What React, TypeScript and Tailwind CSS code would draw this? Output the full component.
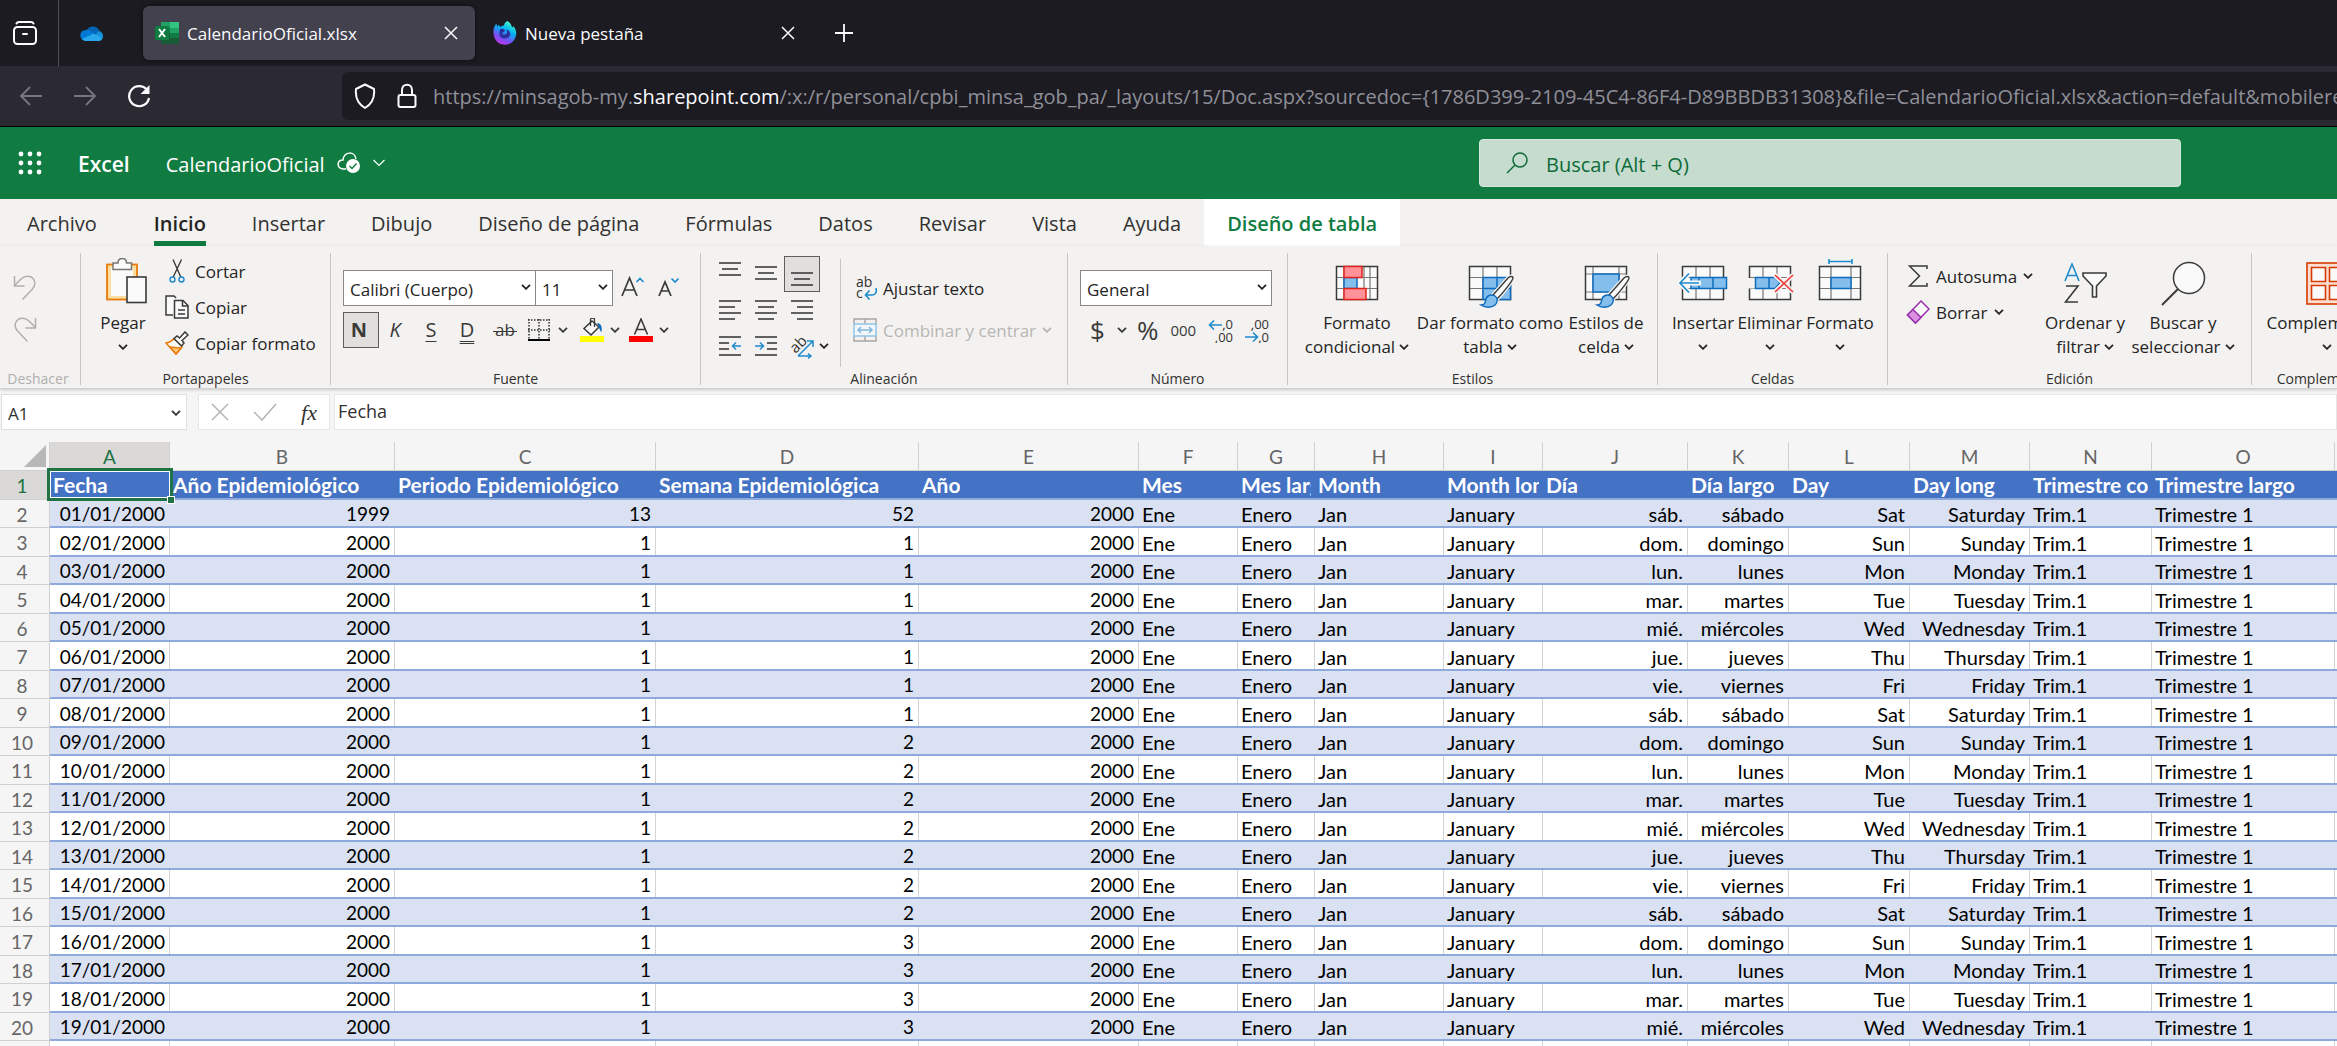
import type { ReactNode } from 'react';
import clsx from 'clsx';

/* ---------- data ---------- */

interface Column {
  letter: string;
  title: string;
  width: string;
  align: 'left' | 'right';
}

const columns: Column[] = [
  { letter: 'A', title: 'Fecha', width: 'w-[120px]', align: 'right' },
  { letter: 'B', title: 'Año Epidemiológico', width: 'w-[225px]', align: 'right' },
  { letter: 'C', title: 'Periodo Epidemiológico', width: 'w-[261px]', align: 'right' },
  { letter: 'D', title: 'Semana Epidemiológica', width: 'w-[263px]', align: 'right' },
  { letter: 'E', title: 'Año', width: 'w-[220px]', align: 'right' },
  { letter: 'F', title: 'Mes', width: 'w-[99px]', align: 'left' },
  { letter: 'G', title: 'Mes largo', width: 'w-[77px]', align: 'left' },
  { letter: 'H', title: 'Month', width: 'w-[129px]', align: 'left' },
  { letter: 'I', title: 'Month long', width: 'w-[99px]', align: 'left' },
  { letter: 'J', title: 'Día', width: 'w-[145px]', align: 'right' },
  { letter: 'K', title: 'Día largo', width: 'w-[101px]', align: 'right' },
  { letter: 'L', title: 'Day', width: 'w-[121px]', align: 'right' },
  { letter: 'M', title: 'Day long', width: 'w-[120px]', align: 'right' },
  { letter: 'N', title: 'Trimestre corto', width: 'w-[122px]', align: 'left' },
  { letter: 'O', title: 'Trimestre largo', width: 'w-[183px]', align: 'left' },
];

// Starts on Saturday, the weekday of 01/01/2000
const weekdays = [
  ['sáb.', 'sábado', 'Sat', 'Saturday'],
  ['dom.', 'domingo', 'Sun', 'Sunday'],
  ['lun.', 'lunes', 'Mon', 'Monday'],
  ['mar.', 'martes', 'Tue', 'Tuesday'],
  ['mié.', 'miércoles', 'Wed', 'Wednesday'],
  ['jue.', 'jueves', 'Thu', 'Thursday'],
  ['vie.', 'viernes', 'Fri', 'Friday'],
];

const rows = Array.from({ length: 20 }, (_, i) => {
  const first = i === 0;
  return [
    `${String(i + 1).padStart(2, '0')}/01/2000`,
    first ? '1999' : '2000',
    first ? '13' : '1',
    first ? '52' : String(Math.floor((i - 1) / 7) + 1),
    '2000',
    'Ene',
    'Enero',
    'Jan',
    'January',
    ...weekdays[i % 7],
    'Trim.1',
    'Trimestre 1',
  ];
});

const ribbonTabs = [
  'Archivo',
  'Inicio',
  'Insertar',
  'Dibujo',
  'Diseño de página',
  'Fórmulas',
  'Datos',
  'Revisar',
  'Vista',
  'Ayuda',
  'Diseño de tabla',
];

/* ---------- small icons ---------- */

function Chevron({ className }: { className?: string }) {
  return (
    <svg viewBox="0 0 10 6" className={clsx('h-[6px] w-[10px] shrink-0', className)} fill="none" stroke="currentColor" strokeWidth="1.8">
      <path d="M1 0.8l4 4 4-4" />
    </svg>
  );
}

function CloseIcon() {
  return (
    <svg viewBox="0 0 14 14" className="h-[14px] w-[14px]" fill="none" stroke="#fbfbfe" strokeWidth="1.5">
      <path d="M1 1l12 12M13 1L1 13" />
    </svg>
  );
}

function FirefoxViewIcon() {
  return (
    <svg viewBox="0 0 26 26" className="h-[26px] w-[26px]" fill="none" stroke="#fbfbfe" strokeWidth="2" strokeLinecap="round">
      <path d="M4.500 3.500C5 2.500 5.500 2 7 2h12c1.500 0 2 .5 2.500 1.500" />
      <rect x="2" y="7" width="22" height="17" rx="3.500" />
      <path d="M11 14h4" />
    </svg>
  );
}

function OneDriveIcon() {
  return (
    <svg viewBox="0 0 24 16" className="h-4 w-6">
      <path d="M7 5a7 7 0 0 1 12.500 1L14 10z" fill="#0364b8" />
      <path d="M5 5.200a5.500 5.500 0 0 1 5 .3l6 4L4 15A5 5 0 0 1 5 5.200z" fill="#0078d4" />
      <path d="M18.500 5.900A5 5 0 0 1 22 14l-7-4z" fill="#1490df" />
      <path d="M14 8.500l8.500 5A4 4 0 0 1 19.500 16H5.500A5 5 0 0 1 1.800 14z" fill="#28a8ea" />
    </svg>
  );
}

function ExcelIcon() {
  return (
    <svg viewBox="0 0 24 22" className="h-[22px] w-6">
      <rect x="6" y="0" width="9" height="6" fill="#21a366" />
      <rect x="15" y="0" width="9" height="6" fill="#33c481" />
      <rect x="6" y="6" width="9" height="5" fill="#107c41" />
      <rect x="15" y="6" width="9" height="5" fill="#21a366" />
      <rect x="6" y="11" width="9" height="11" fill="#185c37" />
      <rect x="15" y="11" width="9" height="5" fill="#107c41" />
      <rect x="15" y="16" width="9" height="6" fill="#185c37" />
      <rect x="0" y="4" width="14" height="14" rx="1" fill="#107c41" />
      <path d="M4 7l6 8M10 7l-6 8" stroke="#fff" strokeWidth="2" />
    </svg>
  );
}

function FirefoxIcon() {
  return (
    <svg viewBox="0 0 24 24" className="h-6 w-6">
      <defs>
        <linearGradient id="fxFlame" x1="0.8" y1="0" x2="0.3" y2="1">
          <stop offset="0" stopColor="#54ffbd" />
          <stop offset="0.4" stopColor="#00b3f4" />
          <stop offset="0.75" stopColor="#7a4df5" />
          <stop offset="1" stopColor="#c139e6" />
        </linearGradient>
      </defs>
      <path
        d="M14.500 0c3 2 4 4 4.500 6.500.8-.3 1.200-1 1.200-1.500 3.300 3.500 3.800 8 2 12A11.300 11.300 0 0 1 1.200 16C0 12 .3 8 1.500 5.500L3.300 2.500l1 3 1.500-1.700 1.500 2.200C8.500 5 9.500 4.500 11 4.500c.2-2 1.500-3.700 3.500-4.500z"
        fill="url(#fxFlame)"
      />
      <path d="M7.500 8c3-1 5 1 4 2.500-1 1-2 .8-2.500 1.800 1 2 4.500 1.500 5-.8.3-1.500-.5-2.500-1-3 3 .5 4.800 3 4 5.800-1.500 4-8 4.500-10 .7C6 13 6.500 10 7.500 8z" fill="#2b2f9c" />
    </svg>
  );
}

function WaffleIcon() {
  return (
    <svg viewBox="0 0 24 24" className="h-6 w-6" fill="#fff">
      {[3, 12, 21].map((y) => [3, 12, 21].map((x) => <circle key={`${x}-${y}`} cx={x} cy={y} r="2.400" />))}
    </svg>
  );
}

/* ---------- ribbon icons ---------- */

const alignLines: Record<string, number[][]> = {
  top: [[0, 2, 22], [3, 8, 16], [0, 14, 22]],
  middle: [[0, 6, 22], [3, 12, 16], [0, 18, 22]],
  bottom: [[0, 12, 22], [3, 18, 16], [0, 24, 22]],
  left: [[0, 4, 22], [0, 10, 16], [0, 16, 22], [0, 22, 16]],
  center: [[0, 4, 22], [3, 10, 16], [0, 16, 22], [3, 22, 16]],
  right: [[0, 4, 22], [6, 10, 16], [0, 16, 22], [6, 22, 16]],
};

function AlignIcon({ kind }: { kind: string }) {
  return (
    <svg viewBox="0 0 22 26" className="h-[26px] w-[22px]" stroke="#323130" strokeWidth="1.5">
      {alignLines[kind].map(([x, y, w]) => (
        <path key={y} d={`M${x} ${y}h${w}`} />
      ))}
    </svg>
  );
}

function IndentIcon({ increase }: { increase?: boolean }) {
  return (
    <svg viewBox="0 0 22 22" className="h-[22px] w-[22px]" fill="none" stroke="#323130" strokeWidth="1.5">
      <path d={increase ? 'M0 2h22M12 8h10M12 14h10M0 20h22' : 'M0 2h22M0 8h10M0 14h10M0 20h22'} />
      <path stroke="#1e8bcd" d={increase ? 'M0 11h8M5 7.500l3.500 3.500L5 14.500' : 'M14 11h8M17 7.500L13.500 11l3.500 3.500'} />
    </svg>
  );
}

function OrientationIcon() {
  return (
    <svg viewBox="0 0 26 26" className="h-[26px] w-[26px]" fill="none">
      <text x="2" y="18" fontSize="15" fill="#323130" transform="rotate(-45 8 14)">ab</text>
      <path d="M9 23L24 8M18 8h6v6M9 23h13M19 20.500l3 2.500-3 2.500" stroke="#1e8bcd" strokeWidth="1.500" />
    </svg>
  );
}

function PasteIcon() {
  return (
    <svg viewBox="0 0 48 48" className="h-12 w-12">
      <rect x="8" y="6.500" width="30" height="35" fill="#fbdfa0" stroke="#e97b0c" strokeWidth="1.800" />
      <rect x="12" y="10" width="22" height="28" fill="#fafafa" />
      <path d="M14 11.500V5h5c0-6 8.500-6 8.500 0h5v6.500z" fill="#fafafa" stroke="#797774" strokeWidth="1.500" />
      <rect x="28" y="19" width="19" height="25.500" fill="#fafafa" stroke="#3a3a38" strokeWidth="1.600" />
    </svg>
  );
}

function CutIcon() {
  return (
    <svg viewBox="0 0 24 24" className="h-6 w-6" fill="none" strokeWidth="1.400">
      <path d="M8 0.500l8 18M16.500 0.500L8 18.500" stroke="#3a3a38" />
      <circle cx="7.500" cy="20.500" r="2.500" stroke="#1e8bcd" />
      <circle cx="16.500" cy="20.500" r="2.500" stroke="#1e8bcd" />
    </svg>
  );
}

function CopyIcon() {
  return (
    <svg viewBox="0 0 24 24" className="h-6 w-6" fill="#fafafa" stroke="#3a3a38" strokeWidth="1.500">
      <path d="M8 20H1V1h8l2 2" />
      <path d="M9.500 5.500H18l5 5v12.500H9.500z" />
      <path d="M17.500 5.500V11H23M13 15h7M13 19h7" fill="none" />
    </svg>
  );
}

function FormatPainterIcon() {
  return (
    <svg viewBox="0 0 24 24" className="h-6 w-6" strokeWidth="1.500">
      <path d="M1 12c3-.5 6-2 8-4.500l8 8c-2 3-4 5.500-6 7.500z" fill="#fafafa" stroke="#e97b0c" />
      <path d="M5 16l11 1-5 6z" fill="#fbc56d" stroke="#e97b0c" />
      <path d="M9 7.500L12 5l2.500 2 5.500-6 3 3-6 5.500 2 2.500-2.500 3z" fill="#fafafa" stroke="#3a3a38" />
    </svg>
  );
}

function UndoIcon({ redo }: { redo?: boolean }) {
  return (
    <svg viewBox="0 0 25 26" className="h-[26px] w-[25px]" fill="none" stroke="#b1afad" strokeWidth="1.500">
      <path
        d={
          redo
            ? 'M23.500 1v10h-10M23.500 10.500L17 4C14 1 8 0 5 3.500C2 7 3 11 6 14.500L15.500 24.500'
            : 'M2.500 1v10h10M2.500 10.500L9 4C12 1 18 0 21 3.500C24 7 23 11 20 14.500L10.500 24.500'
        }
      />
    </svg>
  );
}

function BordersIcon() {
  return (
    <svg viewBox="0 0 22 22" className="h-[22px] w-[22px]" fill="none" stroke="#323130">
      <path d="M0 1h22M0 11h22M1 0v20M11 0v20M21 0v20" strokeWidth="1.500" strokeDasharray="1.500 1.500" />
      <path d="M0 21h22" stroke="#000" strokeWidth="2" />
    </svg>
  );
}

function FillIcon() {
  return (
    <svg viewBox="0 0 24 24" className="h-6 w-6" fill="none">
      <path d="M12 3l7 6-8 8-7-6.500z" fill="#fafafa" stroke="#3a3a38" strokeWidth="1.500" />
      <path d="M10.500 8V1.500c0-2 4-2 4 0V9" stroke="#3a3a38" strokeWidth="1.300" />
      <path d="M17 5c4 0 5.500 4 4.500 9-2-1-2-5-4.500-9z" fill="#0f6cbd" />
      <rect x="0" y="18" width="24" height="6" fill="#ff0" />
    </svg>
  );
}

function FontColorIcon() {
  return (
    <svg viewBox="0 0 24 24" className="h-6 w-6">
      <path d="M5.500 16.500L12 1l6.500 15.500M8 11.500h8" fill="none" stroke="#3a3a38" strokeWidth="1.600" />
      <rect x="0" y="18" width="24" height="6" fill="#f00" />
    </svg>
  );
}

function FontSizeIcon({ shrink }: { shrink?: boolean }) {
  return (
    <svg viewBox="0 0 24 24" className="h-6 w-6" fill="none" stroke="#3a3a38" strokeWidth="1.700">
      <path d={shrink ? 'M2 20L8 6l6 14M4.500 15h7' : 'M1 20L8.500 2 16 20M4 14h9'} />
      <path stroke="#1e8bcd" d={shrink ? 'M14.500 2.500l3.500 3.500 3.500-3.500' : 'M15.500 6L19 2.500 22.500 6'} />
    </svg>
  );
}

function WrapIcon() {
  return (
    <svg viewBox="0 0 24 26" className="h-[26px] w-6" fill="none">
      <text x="3" y="12" fontSize="14" fill="#323130">ab</text>
      <text x="3" y="23" fontSize="14" fill="#323130">c</text>
      <path d="M23 13c1 5-1 7-4 7h-6M16.500 15.500L12.500 20l4 4.500" stroke="#1e8bcd" strokeWidth="1.600" />
    </svg>
  );
}

function MergeIcon() {
  return (
    <svg viewBox="0 0 24 24" className="h-6 w-6" fill="none" strokeWidth="1.500">
      <path d="M1 6V1h22v5M1 18v5h22v-5M12 1v5M12 18v5" stroke="#a8a6a4" />
      <rect x="1" y="6" width="22" height="12" fill="#f3f7fa" stroke="#92c4e6" />
      <path d="M5 12h14M8 9l-3 3 3 3M16 9l3 3-3 3" stroke="#80b9e0" />
    </svg>
  );
}

function DecimalIcon({ decrease }: { decrease?: boolean }) {
  return (
    <svg viewBox="0 0 26 26" className="h-[26px] w-[26px]" fill="none">
      <text x="25" y="12" fontSize="13" textAnchor="end" fill="#323130">{decrease ? ',00' : ',0'}</text>
      <text x="25" y="25" fontSize="13" textAnchor="end" fill="#323130">{decrease ? ',0' : ',00'}</text>
      <path d={decrease ? 'M1 20h12M9 15.500l4.500 4.500L9 24.500' : 'M14 8H2M6 3.500L1.500 8 6 12.500'} stroke="#1e8bcd" strokeWidth="1.600" />
    </svg>
  );
}

// Outer frame shared by every spreadsheet glyph of the ribbon
function SheetFrame({ children, cols }: { children?: ReactNode; cols: string }) {
  return (
    <>
      <rect x="3.500" y="8.500" width="41" height="33" fill="#fafafa" />
      <path d={cols} stroke="#797774" strokeWidth="1.200" fill="none" />
      <rect x="3.500" y="8.500" width="41" height="33" fill="none" stroke="#3a3a38" strokeWidth="1.500" />
      {children}
    </>
  );
}

function Brush() {
  return (
    <>
      <path d="M27 37L42 20c2-2 5-2 5 0s-9 14-16 21z" fill="#fafafa" stroke="#f3f2f1" strokeWidth="4" />
      <path d="M27 37L42 20c2-2 5-2 5 0s-9 14-16 21z" fill="#fafafa" stroke="#3a3a38" strokeWidth="1.400" />
      <path d="M15 47c4 0 4-2 5-6s6-5 9-3 3 6 0 9-10 3-14 0z" fill="#83beec" stroke="#0f6cbd" strokeWidth="1.400" />
    </>
  );
}

function ConditionalIcon() {
  return (
    <svg viewBox="0 0 48 48" className="h-12 w-12">
      <SheetFrame cols="M11 8v34M37 8v34M31 8v34M3 19.500h42M3 30.500h42">
        <rect x="11" y="19.500" width="13" height="11" fill="#83beec" stroke="#0f6cbd" strokeWidth="1.500" />
        <rect x="11" y="8.500" width="18" height="11" fill="#ff9199" stroke="#e2231a" strokeWidth="1.500" />
        <rect x="11" y="30.500" width="22" height="11" fill="#ff9199" stroke="#e2231a" strokeWidth="1.500" />
      </SheetFrame>
    </svg>
  );
}

function TableFormatIcon() {
  return (
    <svg viewBox="0 0 48 48" className="h-12 w-12 overflow-visible">
      <SheetFrame cols="M17 8v34M31 8v34M3 19.500h42M3 30.500h42">
        <path d="M17 19.500h27.500v22H17zM31 19v22M17 30.500h28" fill="#83beec" stroke="#0f6cbd" strokeWidth="1.500" />
      </SheetFrame>
      <Brush />
    </svg>
  );
}

function CellStylesIcon() {
  return (
    <svg viewBox="0 0 48 48" className="h-12 w-12 overflow-visible">
      <SheetFrame cols="M11 8v34M37 8v34M3 16h42M3 34h42">
        <rect x="11" y="16" width="26" height="18" fill="#83beec" stroke="#0f6cbd" strokeWidth="1.500" />
      </SheetFrame>
      <Brush />
    </svg>
  );
}

function InsertCellsIcon() {
  return (
    <svg viewBox="0 0 48 48" className="h-12 w-12 overflow-visible">
      <SheetFrame cols="M17 8v34M31 8v34M3 19.500h42M3 30.500h42">
        <path d="M12 19.500h35.500v11H12zM20 19v12M34 19v12" fill="#83beec" stroke="#0f6cbd" strokeWidth="1.500" />
        <path d="M22 25H2M10 15.500L1 25l9 9.500" stroke="#f8f8f8" strokeWidth="5" fill="none" />
        <path d="M20 25H1.500M10 15.500L1 25l9 9.500" stroke="#1e8bcd" strokeWidth="1.700" fill="none" />
      </SheetFrame>
    </svg>
  );
}

function DeleteCellsIcon() {
  return (
    <svg viewBox="0 0 48 48" className="h-12 w-12 overflow-visible">
      <SheetFrame cols="M17 8v34M31 8v34M3 19.500h42M3 30.500h42">
        <path d="M0 20h9v10.500H0z" fill="#f3f2f1" />
        <path d="M9.500 19.500H29l5 5.500-5 5.500H9.500zM23 19v12" fill="#83beec" stroke="#0f6cbd" strokeWidth="1.500" />
        <path d="M29 17l18 17M47 17L29 34" stroke="#f3f2f1" strokeWidth="5" />
        <path d="M29 17l18 17M47 17L29 34" stroke="#f04040" strokeWidth="1.700" />
      </SheetFrame>
    </svg>
  );
}

function CellFormatIcon() {
  return (
    <svg viewBox="0 0 48 48" className="h-12 w-12">
      <SheetFrame cols="M15 8v34M35 8v34M3 19.500h42M3 30.500h42">
        <rect x="15" y="19.500" width="20" height="11" fill="#83beec" stroke="#0f6cbd" strokeWidth="1.500" />
        <path d="M13 1v5M36 1v5M13 3.500h23" stroke="#1e8bcd" strokeWidth="1.600" />
      </SheetFrame>
    </svg>
  );
}

function SortFilterIcon() {
  return (
    <svg viewBox="0 0 48 48" className="h-12 w-12" fill="none" strokeWidth="1.600">
      <path d="M4 23L11 6l7 17M6.500 17.500h9" stroke="#1e8bcd" />
      <path d="M5 28h12L4.500 44H17" stroke="#3a3a38" />
      <path d="M22 15h23v3L35.500 28v11h-4V28L22 18z" fill="#fafafa" stroke="#3a3a38" />
    </svg>
  );
}

function FindIcon() {
  return (
    <svg viewBox="0 0 48 48" className="h-12 w-12" fill="none" stroke="#3a3a38" strokeWidth="1.500">
      <circle cx="30" cy="20" r="15.500" fill="#fafafa" />
      <path d="M19 31L3 47" strokeWidth="2" />
    </svg>
  );
}

function AddInsIcon() {
  return (
    <svg viewBox="0 0 48 48" className="h-12 w-12" stroke="#d83b01" strokeWidth="1.600">
      <rect x="4" y="5" width="41" height="41" fill="#fcded3" />
      <path d="M8.500 9.500h14v14h-14zM26.500 9.500h14v14h-14zM8.500 27.500h14v14h-14zM26.500 27.500h14v14h-14z" fill="#fafafa" />
    </svg>
  );
}

function SigmaIcon() {
  return (
    <svg viewBox="0 0 24 24" className="h-6 w-6" fill="none" stroke="#3a3a38" strokeWidth="1.500">
      <path d="M21 5V2H3.500l10 10-10 10H21v-3" />
    </svg>
  );
}

function EraserIcon() {
  return (
    <svg viewBox="0 0 24 24" className="h-6 w-6" stroke="#9b2fae" strokeWidth="1.500">
      <path d="M15 1l8 8L9.500 23l-8-8z" fill="#fafafa" />
      <path d="M7 9.500l8 8L9.500 23l-8-8z" fill="#d991e0" />
    </svg>
  );
}

/* ---------- ribbon building blocks ---------- */

function Group({ label, width, children, muted }: { label: string; width: string; children: ReactNode; muted?: boolean }) {
  return (
    <section className={clsx('flex h-[132px] shrink-0 flex-col border-r border-[#c8c6c4]', width)}>
      <div className="flex h-[120px]">{children}</div>
      <h2 className={clsx('text-center text-[14px] leading-3', muted ? 'pr-1 text-[#b1afad]' : 'text-[#323130]')}>{label}</h2>
    </section>
  );
}

function BigButton({ icon, lines, width }: { icon: ReactNode; lines: string[]; width: string }) {
  const [first, second] = lines;
  return (
    <button type="button" className={clsx('flex shrink-0 flex-col items-center pt-[5px] whitespace-nowrap', width)}>
      {icon}
      <span className="mt-[5px] leading-6">{first}</span>
      <span className="flex h-6 items-center gap-1 leading-6">
        {second}
        <Chevron />
      </span>
    </button>
  );
}

function SmallButton({ icon, label, arrow }: { icon: ReactNode; label: string; arrow?: boolean }) {
  return (
    <button type="button" className="flex h-9 items-center gap-[6px] whitespace-nowrap">
      {icon}
      <span className="pt-px">{label}</span>
      {arrow && <Chevron />}
    </button>
  );
}

function Combo({ label, value, width }: { label: string; value: string; width: string }) {
  return (
    <div className={clsx('relative h-9', width)}>
      <select
        aria-label={label}
        className="h-full w-full appearance-none border border-[#8a8886] bg-white pt-[3px] pl-[6px] text-[17px] text-[#252423]"
      >
        <option>{value}</option>
      </select>
      <Chevron className="pointer-events-none absolute top-[14px] right-[5px]" />
    </div>
  );
}

function IconButton({ label, active, children }: { label: string; active?: boolean; children: ReactNode }) {
  return (
    <button
      type="button"
      aria-label={label}
      className={clsx('flex h-9 w-9 items-center justify-center', active && 'border border-[#605e5c] bg-[#e1dfdd]')}
    >
      {children}
    </button>
  );
}

function Ribbon() {
  return (
    <div className="z-10 flex shrink-0 overflow-hidden border-b border-[#d2d0ce] bg-[#f3f2f1] pt-[7px] pb-[3px] text-[17px] text-[#252423] shadow-[0_1px_3px_rgba(0,0,0,0.18)]">
      <Group label="Deshacer" width="w-[81px]" muted>
        <div className="flex flex-col gap-4 pt-[22px] pl-3">
          <button type="button" aria-label="Deshacer"><UndoIcon /></button>
          <button type="button" aria-label="Rehacer"><UndoIcon redo /></button>
        </div>
      </Group>

      <Group label="Portapapeles" width="w-[250px]">
        <div className="flex pl-2">
          <BigButton icon={<PasteIcon />} lines={['Pegar']} width="w-[68px]" />
          <div className="flex flex-col pl-2">
            <SmallButton icon={<CutIcon />} label="Cortar" />
            <SmallButton icon={<CopyIcon />} label="Copiar" />
            <SmallButton icon={<FormatPainterIcon />} label="Copiar formato" />
          </div>
        </div>
      </Group>

      <Group label="Fuente" width="w-[370px]">
        <div className="flex flex-col gap-[6px] pt-[17px] pl-3">
          <div className="flex items-center">
            <Combo label="Fuente" value="Calibri (Cuerpo)" width="w-[193px]" />
            <Combo label="Tamaño de fuente" value="11" width="w-[78px] -ml-px" />
            <button type="button" aria-label="Aumentar tamaño" className="ml-2"><FontSizeIcon /></button>
            <button type="button" aria-label="Disminuir tamaño" className="ml-3"><FontSizeIcon shrink /></button>
          </div>
          <div className="flex items-center text-[20px] text-[#3a3a38]">
            <IconButton label="Negrita" active><b className="pr-1">N</b></IconButton>
            <IconButton label="Cursiva"><i className="pr-1">K</i></IconButton>
            <IconButton label="Subrayado"><span className="mr-1 underline decoration-1 underline-offset-4">S</span></IconButton>
            <IconButton label="Doble subrayado">
              <span className="mr-1 underline decoration-double decoration-1 underline-offset-4">D</span>
            </IconButton>
            <IconButton label="Tachado">
              <span className="relative text-[17px]">
                ab
                <span className="absolute inset-x-[-2px] top-[14px] h-px bg-[#3a3a38]" />
              </span>
            </IconButton>
            <div className="ml-[5px] flex items-center gap-2">
              <button type="button" aria-label="Bordes" className="flex items-center gap-2"><BordersIcon /><Chevron /></button>
              <button type="button" aria-label="Color de relleno" className="flex items-center gap-[6px] pl-1"><FillIcon /><Chevron /></button>
              <button type="button" aria-label="Color de fuente" className="flex items-center gap-[6px] pl-px"><FontColorIcon /><Chevron /></button>
            </div>
          </div>
        </div>
      </Group>

      <Group label="Alineación" width="w-[367px]">
        <div className="pt-[3px] pl-[11px]">
          <div className="flex">
            <IconButton label="Alinear arriba"><AlignIcon kind="top" /></IconButton>
            <IconButton label="Alinear en el medio"><AlignIcon kind="middle" /></IconButton>
            <IconButton label="Alinear abajo" active><AlignIcon kind="bottom" /></IconButton>
          </div>
          <div className="flex">
            <IconButton label="Alinear a la izquierda"><AlignIcon kind="left" /></IconButton>
            <IconButton label="Centrar"><AlignIcon kind="center" /></IconButton>
            <IconButton label="Alinear a la derecha"><AlignIcon kind="right" /></IconButton>
          </div>
          <div className="flex">
            <IconButton label="Disminuir sangría"><IndentIcon /></IconButton>
            <IconButton label="Aumentar sangría"><IndentIcon increase /></IconButton>
            <button type="button" aria-label="Orientación" className="flex items-center gap-1 pl-[5px]">
              <OrientationIcon />
              <Chevron />
            </button>
          </div>
        </div>
        <div className="my-[6px] ml-[11px] border-l border-[#c8c6c4]" />
        <div className="flex flex-col gap-[6px] pt-[17px] pl-3">
          <SmallButton icon={<WrapIcon />} label="Ajustar texto" />
          <div className="text-[#b8b6b4]">
            <SmallButton icon={<MergeIcon />} label="Combinar y centrar" arrow />
          </div>
        </div>
      </Group>

      <Group label="Número" width="w-[220px]">
        <div className="flex flex-col gap-[6px] pt-[17px] pl-3">
          <Combo label="Formato de número" value="General" width="w-[192px]" />
          <div className="flex h-9 items-center pl-[10px] text-[#3a3a38]">
            <button type="button" aria-label="Moneda" className="flex items-center gap-3 text-[26px] leading-9">$<Chevron /></button>
            <button type="button" aria-label="Porcentaje" className="ml-[10px] text-[26px] leading-9">%</button>
            <button type="button" aria-label="Millares" className="ml-3 text-[15px]">000</button>
            <button type="button" aria-label="Aumentar decimales" className="ml-3"><DecimalIcon /></button>
            <button type="button" aria-label="Disminuir decimales" className="ml-[10px]"><DecimalIcon decrease /></button>
          </div>
        </div>
      </Group>

      <Group label="Estilos" width="w-[370px]">
        <div className="flex pl-3">
          <BigButton icon={<ConditionalIcon />} lines={['Formato', 'condicional']} width="w-[114px]" />
          <BigButton icon={<TableFormatIcon />} lines={['Dar formato como', 'tabla']} width="w-[152px]" />
          <BigButton icon={<CellStylesIcon />} lines={['Estilos de', 'celda']} width="w-[80px]" />
        </div>
      </Group>

      <Group label="Celdas" width="w-[230px]">
        <div className="flex pl-3">
          <BigButton icon={<InsertCellsIcon />} lines={['Insertar']} width="w-[66px]" />
          <BigButton icon={<DeleteCellsIcon />} lines={['Eliminar']} width="w-[68px]" />
          <BigButton icon={<CellFormatIcon />} lines={['Formato']} width="w-[72px]" />
        </div>
      </Group>

      <Group label="Edición" width="w-[364px]">
        <div className="flex w-[152px] flex-col pt-[5px] pl-[18px]">
          <SmallButton icon={<SigmaIcon />} label="Autosuma" arrow />
          <SmallButton icon={<EraserIcon />} label="Borrar" arrow />
        </div>
        <BigButton icon={<SortFilterIcon />} lines={['Ordenar y', 'filtrar']} width="w-[90px]" />
        <BigButton icon={<FindIcon />} lines={['Buscar y', 'seleccionar']} width="w-[106px]" />
      </Group>

      <Group label="Complementos" width="w-[150px]">
        <BigButton icon={<AddInsIcon />} lines={['Complementos']} width="w-[150px]" />
      </Group>
    </div>
  );
}

/* ---------- browser chrome ---------- */

function BrowserTabs() {
  return (
    <div className="flex h-[66px] shrink-0 items-center bg-[#1c1b22] text-[17px] text-[#fbfbfe]">
      <button type="button" aria-label="Firefox View" className="flex h-full w-[59px] items-center border-r border-[#52525e] pl-3">
        <FirefoxViewIcon />
      </button>
      <button type="button" aria-label="OneDrive" className="flex w-[84px] items-center pl-[21px]"><OneDriveIcon /></button>
      <div className="flex h-[54px] w-[332px] items-center rounded-md bg-[#42414d] pr-[17px] pl-3 shadow-[0_0_4px_rgba(0,0,0,0.6)]">
        <ExcelIcon />
        <span className="ml-2 flex-1 pt-[2px]">CalendarioOficial.xlsx</span>
        <button type="button" aria-label="Cerrar pestaña"><CloseIcon /></button>
      </div>
      <div className="flex h-[54px] w-[338px] items-center pr-[18px] pl-[18px]">
        <FirefoxIcon />
        <span className="ml-2 flex-1 pt-[2px]">Nueva pestaña</span>
        <button type="button" aria-label="Cerrar pestaña"><CloseIcon /></button>
      </div>
      <button type="button" aria-label="Abrir una pestaña nueva" className="ml-[22px]">
        <svg viewBox="0 0 18 18" className="h-[18px] w-[18px]" stroke="#fbfbfe" strokeWidth="1.800">
          <path d="M9 0v18M0 9h18" />
        </svg>
      </button>
    </div>
  );
}

function BrowserToolbar() {
  return (
    <div className="flex h-[61px] shrink-0 items-center overflow-hidden border-b border-black bg-[#2b2a33]">
      <div className="flex w-[342px] shrink-0 items-center gap-[30px] pl-[19px]">
        <button type="button" aria-label="Atrás">
          <svg viewBox="0 0 24 24" className="h-6 w-6" fill="none" stroke="#77767e" strokeWidth="1.800">
            <path d="M23 12H2M11 3l-9 9 9 9" />
          </svg>
        </button>
        <button type="button" aria-label="Adelante">
          <svg viewBox="0 0 24 24" className="h-6 w-6" fill="none" stroke="#77767e" strokeWidth="1.800">
            <path d="M1 12h21M13 3l9 9-9 9" />
          </svg>
        </button>
        <button type="button" aria-label="Recargar">
          <svg viewBox="0 0 24 24" className="h-6 w-6" fill="none" stroke="#fbfbfe" strokeWidth="2.200">
            <path d="M20 6a10 10 0 1 0 2 8" />
            <path d="M22.500 1v9h-9z" fill="#fbfbfe" stroke="none" />
          </svg>
        </button>
      </div>
      <div className="flex h-12 flex-1 items-center overflow-hidden rounded-l-md bg-[#1c1b22] pl-3 text-[20px] whitespace-nowrap text-[#8f8f97]">
        <svg viewBox="0 0 22 26" className="h-[26px] w-[22px] shrink-0" fill="none" stroke="#fbfbfe" strokeWidth="2" strokeLinejoin="round">
          <path d="M11 1.500l9 4.500c1 9-2 15-9 19C4 21 1 15 2 6z" />
        </svg>
        <svg viewBox="0 0 20 26" className="ml-[21px] h-[26px] w-5 shrink-0" fill="none" stroke="#fbfbfe" strokeWidth="2">
          <path d="M5 12V7c0-7 10-7 10 0v5" />
          <rect x="1.500" y="12" width="17" height="12" rx="2" />
        </svg>
        <p className="ml-4 pt-[2px]">
          https://minsagob-my.<span className="text-[#fbfbfe]">sharepoint.com</span>
          /:x:/r/personal/cpbi_minsa_gob_pa/_layouts/15/Doc.aspx?sourcedoc=&#123;1786D399-2109-45C4-86F4-D89BBDB31308&#125;&amp;file=CalendarioOficial.xlsx&amp;action=default&amp;mobileredirect=true
        </p>
      </div>
    </div>
  );
}

/* ---------- Excel header ---------- */

function ExcelHeader() {
  return (
    <header className="flex h-[72px] shrink-0 items-center bg-[#107c41] pl-[18px] text-[20px] text-white">
      <button type="button" aria-label="Iniciador de aplicaciones"><WaffleIcon /></button>
      <a href="#" className="ml-9 pt-[3px] text-[21px] font-semibold">Excel</a>
      <button type="button" className="ml-9 flex items-center">
        <span className="pt-[3px]">CalendarioOficial</span>
        <svg viewBox="0 0 24 22" className="ml-3 h-[22px] w-6" fill="none" stroke="#fff" strokeWidth="1.500">
          <path d="M9 17H6c-7-1-6-9 0-9 1-9 12-9 13-1" />
          <circle cx="16" cy="14" r="7" fill="#fff" stroke="none" />
          <path d="M12.500 14l2.500 2.500 4.500-5" stroke="#107c41" />
        </svg>
        <svg viewBox="0 0 12 8" className="ml-3 h-2 w-3" fill="none" stroke="#fff" strokeWidth="1.200">
          <path d="M0.500 1L6 6.500 11.500 1" />
        </svg>
      </button>
      <label className="mr-[156px] ml-auto flex h-12 w-[702px] items-center rounded-[4px] border border-[#d5e8dc] bg-[#c6dccf] pl-[26px]">
        <svg viewBox="0 0 22 22" className="h-[22px] w-[22px]" fill="none" stroke="#0e6b38" strokeWidth="1.500">
          <circle cx="14" cy="8" r="7" />
          <path d="M9 13l-8 8" />
        </svg>
        <input aria-label="Buscar" placeholder="Buscar (Alt + Q)" className="ml-[18px] flex-1 bg-transparent pt-[3px] outline-none placeholder:text-[#0e6b38]" />
      </label>
    </header>
  );
}

function RibbonTabs() {
  return (
    <nav className="flex h-[47px] shrink-0 bg-[#f3f2f1] text-[20px] whitespace-nowrap text-[#323130]">
      {ribbonTabs.map((tab) => (
        <button
          key={tab}
          type="button"
          className={clsx(
            'px-[23px]',
            tab === 'Archivo' && 'mr-[11px] ml-1',
            tab === 'Diseño de tabla' && 'bg-white font-semibold text-[#107c41]',
            tab === 'Inicio' && 'font-semibold text-[#252423]',
          )}
        >
          <span className={clsx('flex h-full items-center', tab === 'Inicio' ? 'border-b-[5px] border-[#107c41] pt-[7px]' : 'pt-[2px]')}>{tab}</span>
        </button>
      ))}
    </nav>
  );
}

function FormulaBar() {
  return (
    <div className="flex shrink-0 bg-[#f5f5f5] pt-[5px] pb-3 text-[18px] text-[#323130]">
      <div className="relative ml-px h-9 w-[186px]">
        <select aria-label="Cuadro de nombres" className="h-full w-full appearance-none border border-[#e1dfdd] bg-white pt-[3px] pl-[6px] text-[17px]">
          <option>A1</option>
        </select>
        <Chevron className="pointer-events-none absolute top-[16px] right-[6px]" />
      </div>
      <div className="ml-[11px] flex h-9 w-[132px] items-center justify-between border border-[#e6e6e6] bg-white pr-3 pl-3">
        <button type="button" aria-label="Cancelar">
          <svg viewBox="0 0 18 18" className="h-[18px] w-[18px]" stroke="#b5b3b1" strokeWidth="1.500">
            <path d="M1 1l16 16M17 1L1 17" />
          </svg>
        </button>
        <button type="button" aria-label="Introducir">
          <svg viewBox="0 0 24 18" className="h-[18px] w-6" fill="none" stroke="#b5b3b1" strokeWidth="1.500">
            <path d="M1 9l8 8L23 1" />
          </svg>
        </button>
        <button type="button" aria-label="Insertar función" className="font-['Liberation_Serif',serif] text-[22px] italic">fx</button>
      </div>
      <input aria-label="Barra de fórmulas" defaultValue="Fecha" className="ml-1 h-9 min-w-0 flex-1 border border-[#e6e6e6] bg-white pb-[2px] pl-[3px] outline-none" />
    </div>
  );
}

/* ---------- sheet ---------- */

function Sheet() {
  return (
    <div className="min-h-0 flex-1 overflow-hidden bg-white font-['Lato','Noto_Sans',sans-serif] text-[19px] leading-6 text-black">
      <table className="w-full min-w-[2337px] table-fixed border-separate border-spacing-0">
        <thead>
          <tr className="bg-[#f5f5f5] text-[#666]">
            <th className="h-[29px] w-[50px] border-r border-b border-[#d0d0d0] p-0">
              <svg viewBox="0 0 22 22" className="mr-[3px] ml-auto h-[22px] w-[22px]">
                <path d="M22 0v22H0z" fill="#b8b8b8" />
              </svg>
            </th>
            {columns.map((col) => (
              <th
                key={col.letter}
                scope="col"
                className={clsx(
                  'h-[29px] border-r border-b border-[#d0d0d0] p-0 pt-[2px] font-normal',
                  col.width,
                  col.letter === 'A' && 'bg-[#dad9d7] text-[#217346]',
                )}
              >
                {col.letter}
              </th>
            ))}
            <th className="border-b border-[#d0d0d0] p-0" />
          </tr>
        </thead>
        <tbody>
          <tr className="bg-[#4472c4] text-[21px] font-bold text-white">
            <th scope="row" className="border-r border-b border-[#d0d0d0] bg-[#dad9d7] p-0 pt-[2px] pr-[5px] text-[19px] font-normal text-[#217346]">1</th>
            {columns.map((col) => (
              <td key={col.letter} className="relative border-b-2 border-[#8ea9db] p-0">
                <div className="flex h-[27px] items-center overflow-hidden pt-px pr-1 pl-[3px] whitespace-nowrap">
                  <span className="overflow-hidden">{col.title}</span>
                </div>
                {col.letter === 'A' && (
                  <>
                    <div className="absolute -inset-x-[3px] -top-[3px] -bottom-[3px] z-10 border-[3px] border-[#217346]">
                      <div className="h-full border border-white" />
                    </div>
                    <div className="absolute -right-[5px] -bottom-[6px] z-20 h-2 w-2 border border-white bg-[#217346]" />
                  </>
                )}
              </td>
            ))}
            <td className="border-b-2 border-[#8ea9db] p-0" />
          </tr>
          {rows.map((cells, r) => {
            const banded = r % 2 === 0;
            return (
              <tr key={cells[0]} className={banded ? 'bg-[#d9e1f2]' : 'bg-white'}>
                <th scope="row" className="border-r border-b border-[#d0d0d0] bg-[#f5f5f5] p-0 pt-[2px] pr-[5px] font-normal text-[#666]">{r + 2}</th>
                {cells.map((cell, c) => (
                  <td key={columns[c].letter} className="border-b-2 border-[#8ea9db] p-0">
                    <div
                      className={clsx(
                        'flex items-center border-r pt-[2px] pr-[4px] pl-[3px] whitespace-nowrap',
                        banded ? 'h-[26px] border-transparent' : 'h-[27px] border-[#d4d4d4]',
                        columns[c].align === 'right' && 'justify-end',
                        c > 4 && 'text-[20px]',
                      )}
                    >
                      {cell}
                    </div>
                  </td>
                ))}
                <td className="border-b-2 border-[#8ea9db] p-0" />
              </tr>
            );
          })}
        </tbody>
      </table>
    </div>
  );
}

export default function App() {
  return (
    <div className="flex h-screen flex-col overflow-hidden bg-[#f5f5f5] font-['Open_Sans','Noto_Sans',sans-serif]">
      <BrowserTabs />
      <BrowserToolbar />
      <ExcelHeader />
      <RibbonTabs />
      <Ribbon />
      <FormulaBar />
      <Sheet />
    </div>
  );
}
